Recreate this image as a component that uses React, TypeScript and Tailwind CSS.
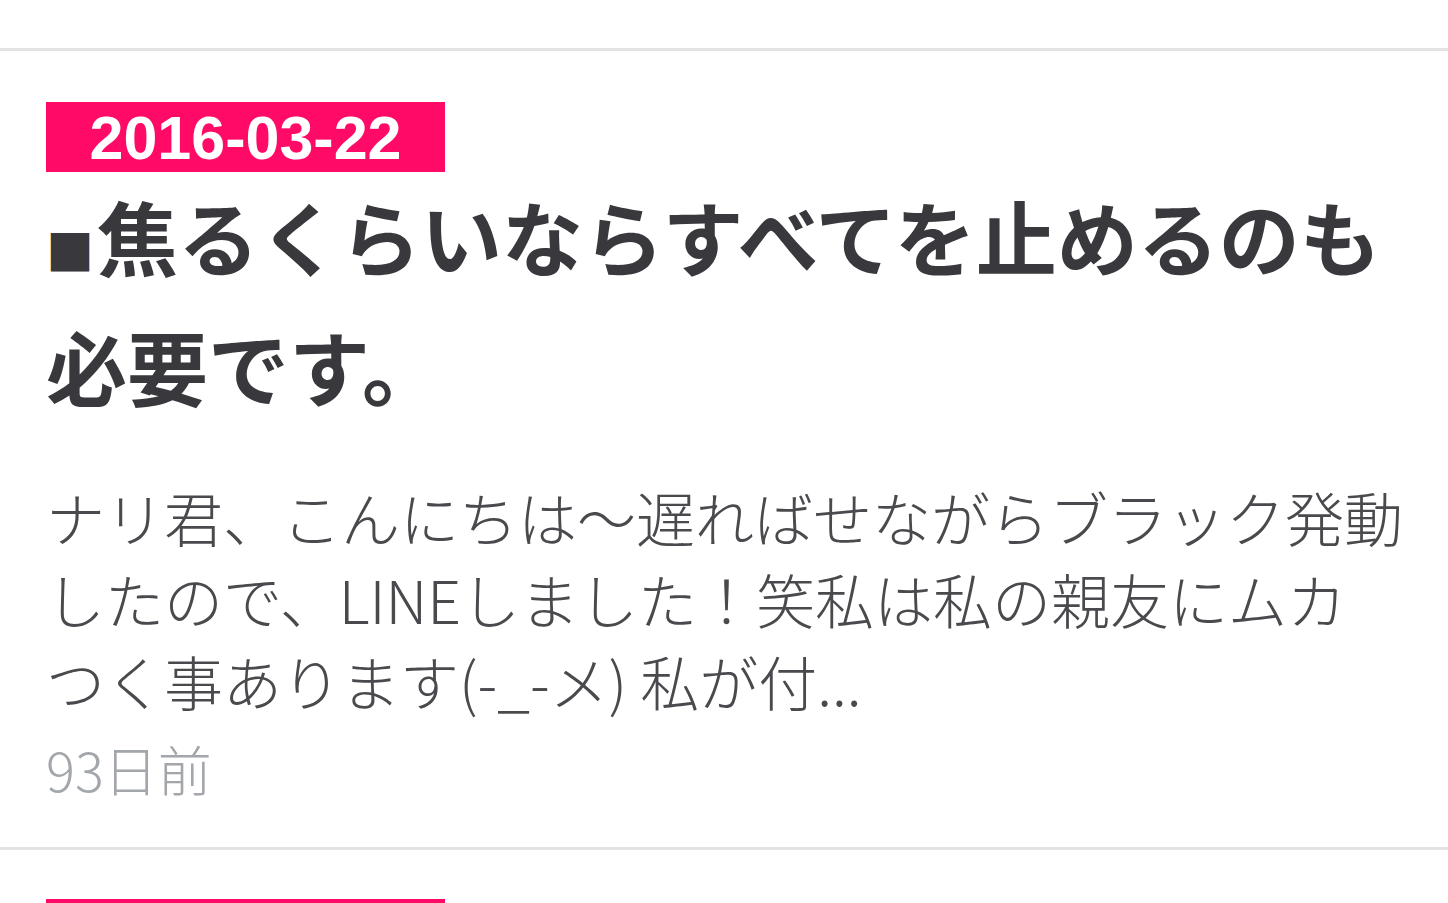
import React from "react";

const jp = { fontFamily: '"Noto Sans CJK JP", "Noto Sans", sans-serif' };

function DateBadge({ date }: { date: string }) {
  return (
    <div
      className="flex h-[70px] w-[399px] items-center justify-center bg-[#ff0a66] pt-[3px] text-[61px] font-bold leading-none text-white"
      style={{ fontFamily: '"Liberation Sans", Arial, sans-serif' }}
    >
      {date}
    </div>
  );
}

export default function App() {
  return (
    <div className="h-[903px] w-[1448px] overflow-hidden bg-white" style={jp}>
      <div className="h-[48px]" />
      <div className="h-[3px] bg-[#e3e3e5]" />

      <article className="px-[46px] pt-[51px] pb-[40px]">
        <DateBadge date="2016-03-22" />
        <h2 className="-mt-[2px] text-[81px] font-bold leading-[130px] text-[#38383d]">
          <span className="block whitespace-nowrap">
            <span className="mr-[3px] text-[48px] leading-none">■</span>
            焦るくらいならすべてを止めるのも
          </span>
          <span className="block whitespace-nowrap">必要です。</span>
        </h2>
        <p className="mt-[46px] text-[59px] font-light leading-[82px] text-[#4a4a4e]">
          <span className="block whitespace-nowrap">ナリ君、こんにちは〜遅ればせながらブラック発動</span>
          <span className="block whitespace-nowrap">したので、LINEしました！笑私は私の親友にムカ</span>
          <span className="block whitespace-nowrap">つく事あります(-_-メ) 私が付...</span>
        </p>
        <div className="mt-[9px] text-[54px] font-light leading-[76px] text-[#a3a6aa]">93日前</div>
      </article>

      <div className="h-[3px] bg-[#e3e3e5]" />
      <div className="px-[46px] pt-[49px]">
        <DateBadge date="2016-03-15" />
      </div>
    </div>
  );
}
